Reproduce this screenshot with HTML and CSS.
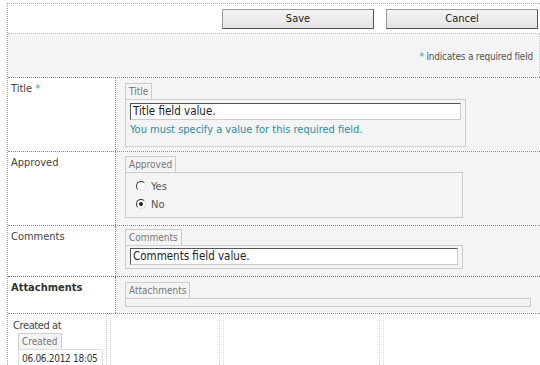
FILE: index.html
```html
<!DOCTYPE html>
<html lang="en">
<head>
    <meta charset="UTF-8">
    <title>Item form</title>
    <link rel="stylesheet" href="styles.css">
</head>
<body>
    <div class="form">
        <div class="toolbar">
            <div class="btn">Save</div>
            <div class="btn">Cancel</div>
        </div>
        <div class="note"><span class="star">*</span> indicates a required field</div>
        <div class="row row-title">
            <div class="label">Title <span class="star">*</span></div>
            <div class="field">
                <div class="tab">Title</div>
                <div class="group group-title">
                    <div class="input">Title field value.</div>
                    <div class="error">You must specify a value for this required field.</div>
                </div>
            </div>
        </div>
        <div class="row row-approved">
            <div class="label">Approved</div>
            <div class="field">
                <div class="tab">Approved</div>
                <div class="group group-approved">
                    <div class="radio"><span class="dot"></span>Yes</div>
                    <div class="radio"><span class="dot checked"></span>No</div>
                </div>
            </div>
        </div>
        <div class="row row-comments">
            <div class="label">Comments</div>
            <div class="field">
                <div class="tab">Comments</div>
                <div class="group group-comments">
                    <div class="input">Comments field value.</div>
                </div>
            </div>
        </div>
        <div class="row row-attach">
            <div class="label bold">Attachments</div>
            <div class="field">
                <div class="tab">Attachments</div>
                <div class="group group-attach"></div>
            </div>
        </div>
        <div class="bottom">
            <div class="col col-1">
                <div class="created">Created at</div>
                <div class="tab">Created</div>
                <div class="group group-created">06.06.2012 18:05</div>
            </div>
            <div class="col col-2"></div>
            <div class="col col-3"></div>
            <div class="col col-4"></div>
        </div>
    </div>
</body>
</html>
```

FILE: styles.css
```css
* {
    margin: 0;
    padding: 0;
    box-sizing: border-box;
}
body {
    background: white;
    font-family: 'DejaVu Sans Condensed', 'DejaVu Sans', sans-serif;
    font-stretch: condensed;
    font-size: 11px;
    color: #444;
}
.form {
    margin: 3px 0 0 7px;
    border-top: 1px dotted #aaa;
    border-left: 1px dotted #aaa;
}
.toolbar {
    height: 30px;
    display: flex;
    justify-content: flex-end;
    gap: 12px;
    padding: 5px 2px 0 0;
    border-bottom: 1px dotted #bbb;
}
.btn {
    width: 152px;
    height: 20px;
    background: linear-gradient(#f4f4f4, #e4e4e4);
    border: 1px solid #999;
    border-right-color: #555;
    border-bottom-color: #555;
    text-align: center;
    line-height: 18px;
    font-size: 11px;
    color: #222;
}
.note {
    height: 43px;
    background: #f4f4f4;
    text-align: right;
    padding: 17px 6px 0 0;
    font-size: 10px;
    letter-spacing: -0.2px;
    color: #555;
    border-right: 1px dotted #ccc;
}
.star {
    color: #3aa3b0;
}
.row {
    display: flex;
    border-top: 1px dotted #888;
}
.label {
    width: 108px;
    padding: 4px 3px;
    border-right: 1px dotted #888;
    font-size: 11px;
    color: #444;
}
.label.bold {
    font-weight: bold;
    color: #333;
}
.field {
    flex: 1;
    background: #f4f4f4;
    padding: 5px 0 0 9px;
}
.row-title { height: 74px; }
.row-approved { height: 74px; }
.row-approved .field { padding-top: 4px; }
.row-comments { height: 51px; }
.row-comments .field { padding-top: 3px; }
.row-attach { height: 37px; border-top-color: #666; }
.tab {
    display: inline-block;
    border: 1px solid #ccc;
    border-bottom: none;
    background: #f4f4f4;
    color: #777;
    font-size: 10px;
    padding: 1px 3px;
    line-height: 13px;
}
.group {
    border: 1px solid #ccc;
    background: #f4f4f4;
}
.group-title {
    width: 341px;
    height: 48px;
    padding: 3px 4px;
}
.input {
    background: white;
    border: 1px solid #ccc;
    border-top-color: #555;
    border-left-color: #555;
    height: 17px;
    padding: 0 2px;
    font-size: 11.5px;
    line-height: 15px;
    color: #222;
}
.error {
    color: #2a8ea0;
    font-size: 11px;
    margin-top: 3px;
}
.group-approved {
    width: 338px;
    height: 46px;
    padding: 4px 10px;
}
.radio {
    display: flex;
    align-items: center;
    gap: 5px;
    height: 18px;
    color: #555;
}
.dot {
    width: 10px;
    height: 10px;
    border-radius: 50%;
    border: 1px solid #ddd;
    border-left-color: #333;
    border-top-color: #333;
    background: white;
    position: relative;
}
.dot.checked::after {
    content: "";
    position: absolute;
    left: 2px;
    top: 2px;
    width: 4px;
    height: 4px;
    border-radius: 50%;
    background: #222;
}
.group-comments {
    width: 338px;
    height: 24px;
    padding: 2px 4px;
}
.group-attach {
    width: 406px;
    height: 9px;
}
.bottom {
    display: flex;
    gap: 3px;
    height: 52px;
    border-top: 1px dotted #888;
}
.col {
    border-right: 1px dotted #ccc;
}
.col-2, .col-3, .col-4 {
    border-left: 1px dotted #ddd;
}
.col-1 {
    width: 99px;
    padding: 5px 4px 0 5px;
}
.col-2 { width: 110px; }
.col-3 { width: 157px; }
.col-4 { flex: 1; border-right: none; }
.created {
    color: #444;
    letter-spacing: -0.4px;
    margin-bottom: 1px;
}
.col-1 .tab {
    margin-left: 5px;
}
.group-created {
    margin-left: 5px;
    width: 85px;
    height: 22px;
    background: white;
    border-color: #ddd;
    padding: 3px 3px;
    font-size: 10px;
    letter-spacing: -0.3px;
    color: #333;
    white-space: nowrap;
}
```
